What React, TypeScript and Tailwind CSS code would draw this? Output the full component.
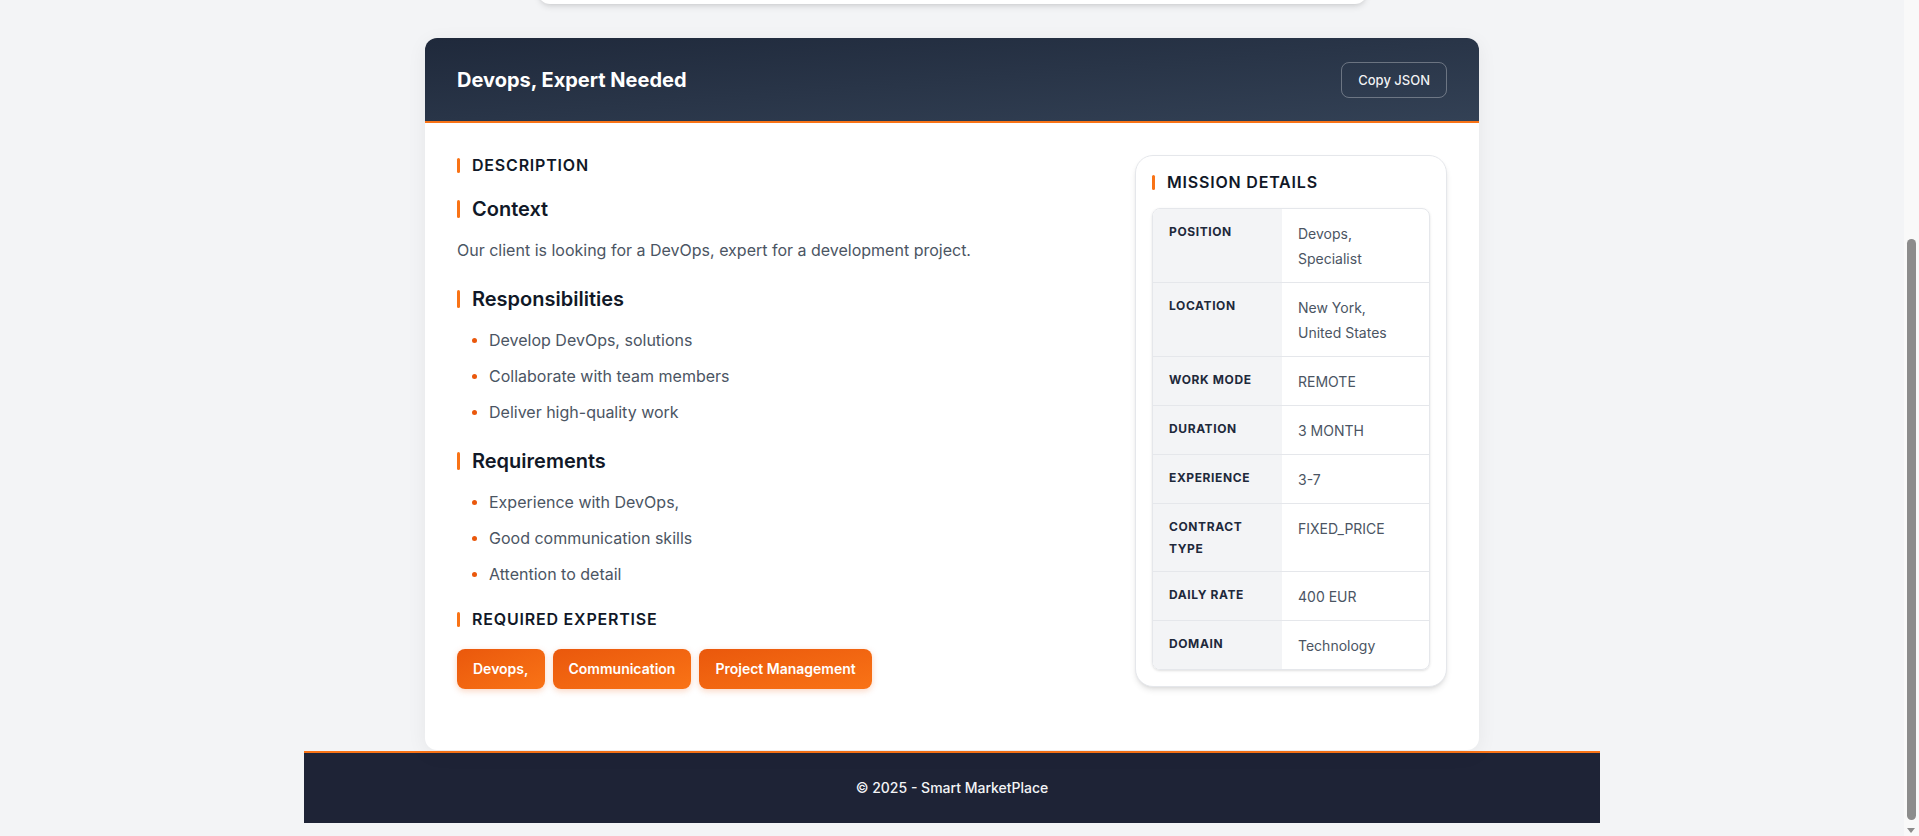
import { useLayoutEffect } from "react";

const details = [
  { label: "Position", value: "Devops, Specialist" },
  { label: "Location", value: "New York, United States" },
  { label: "Work Mode", value: "REMOTE" },
  { label: "Duration", value: "3 MONTH" },
  { label: "Experience", value: "3-7" },
  { label: "Contract Type", value: "FIXED_PRICE" },
  { label: "Daily Rate", value: "400 EUR" },
  { label: "Domain", value: "Technology" },
];

const responsibilities = [
  "Develop DevOps, solutions",
  "Collaborate with team members",
  "Deliver high-quality work",
];

const requirements = [
  "Experience with DevOps,",
  "Good communication skills",
  "Attention to detail",
];

const skills = ["Devops,", "Communication", "Project Management"];

function SectionLabel({ children, className = "" }: { children: string; className?: string }) {
  return (
    <div className={`flex items-center gap-3 ${className}`}>
      <span className="w-[3px] h-[15px] rounded-sm bg-[#f97316]" />
      <h4 className="text-base leading-5 font-semibold tracking-wider uppercase text-[#111827]">
        {children}
      </h4>
    </div>
  );
}

function SubHeading({ children }: { children: string }) {
  return (
    <div className="flex items-center gap-3 mb-[14px]">
      <span className="w-[3px] h-[18px] rounded-sm bg-[#f97316]" />
      <h3 className="text-xl leading-7 font-semibold text-[#111827]">{children}</h3>
    </div>
  );
}

function BulletList({ items }: { items: string[] }) {
  return (
    <ul className="flex flex-col gap-[10px] mb-[22px]">
      {items.map((item) => (
        <li key={item} className="flex items-center gap-3 pl-[15px] text-base leading-[26px] text-[#4b5563]">
          <span className="w-[5px] h-[5px] rounded-full bg-[#ea580c] shrink-0" />
          {item}
        </li>
      ))}
    </ul>
  );
}

function GeneratorCard() {
  return (
    <div className="w-[829px] h-[288px] rounded-xl bg-white shadow-md px-6 pt-6 pb-20 flex flex-col gap-4">
      <h2 className="text-lg font-semibold text-[#111827]">Generate a mission</h2>
      <div className="flex gap-3">
        <input
          className="flex-1 rounded-lg border border-gray-200 px-3 py-2 text-sm text-[#4b5563]"
          defaultValue="Devops, expert needed in New York, remote, 3 months"
        />
        <button className="rounded-lg bg-[#f97316] px-5 py-2 text-sm font-semibold text-white">
          Generate
        </button>
      </div>
    </div>
  );
}

function ScrollTrack() {
  return (
    <div aria-hidden className="fixed right-0 top-0 w-[15px] h-screen bg-[#f9f9f9]">
      <div className="absolute left-[3px] top-[239px] w-[9px] h-[581px] rounded-full bg-[#8c8c8c]" />
      <div className="absolute left-[3px] bottom-[3px] w-0 h-0 border-l-[4.5px] border-r-[4.5px] border-t-[5px] border-l-transparent border-r-transparent border-t-[#8c8c8c]" />
    </div>
  );
}

export default function App() {
  useLayoutEffect(() => {
    window.scrollTo(0, document.documentElement.scrollHeight);
  }, []);

  return (
    <div className="min-h-screen bg-[#f3f4f6] font-['Inter',sans-serif] pb-[13px] pr-[15px]">
      <div className="pt-10 flex justify-center">
        <GeneratorCard />
      </div>

      <main className="mt-[34px] flex justify-center">
        <div className="w-[1054px] rounded-xl bg-white overflow-hidden shadow-[0_4px_20px_rgba(0,0,0,0.06)]">
          <div className="h-[85px] flex items-center justify-between px-8 border-b-2 border-[#f97316] bg-linear-to-br from-[#1f293b] to-[#334155]">
            <h1 className="text-xl leading-7 font-bold text-white">Devops, Expert Needed</h1>
            <button className="rounded-lg border border-white/30 px-4 py-2 text-[13px] leading-[18px] font-medium text-white/95">
              Copy JSON
            </button>
          </div>

          <div className="flex gap-8 px-8 pt-8 pb-[61px]">
            <div className="flex-1">
              <SectionLabel className="mb-5">Description</SectionLabel>

              <SubHeading>Context</SubHeading>
              <p className="text-base leading-[26px] text-[#4b5563] mb-[22px]">
                Our client is looking for a DevOps, expert for a development project.
              </p>

              <SubHeading>Responsibilities</SubHeading>
              <BulletList items={responsibilities} />

              <SubHeading>Requirements</SubHeading>
              <BulletList items={requirements} />

              <SectionLabel className="mb-5">Required Expertise</SectionLabel>
              <div className="flex gap-2">
                {skills.map((s) => (
                  <span
                    key={s}
                    className="h-10 flex items-center px-4 rounded-lg bg-linear-to-br from-[#ea580c] to-[#f97316] text-sm font-semibold text-white shadow-[0_2px_6px_rgba(234,88,12,0.25)]"
                  >
                    {s}
                  </span>
                ))}
              </div>
            </div>

            <aside className="w-[312px] shrink-0 self-start rounded-[18px] border border-gray-200 bg-white p-4 shadow-md">
              <SectionLabel className="mb-4">Mission Details</SectionLabel>
              <div className="rounded-lg border border-gray-200 overflow-hidden shadow-sm">
                {details.map((d, i) => (
                  <div
                    key={d.label}
                    className={`flex ${i < details.length - 1 ? "border-b border-gray-200" : ""}`}
                  >
                    <div className="w-[129px] shrink-0 bg-[#f3f4f6] px-4 py-[11.5px] text-xs leading-[22px] font-bold tracking-wider uppercase text-[#1e293b]">
                      {d.label}
                    </div>
                    <div className="flex-1 px-4 py-[11.5px] text-sm leading-[25px] text-[#4b5563]">
                      {d.value}
                    </div>
                  </div>
                ))}
              </div>
            </aside>
          </div>
        </div>
      </main>

      <footer className="mt-px mx-auto w-[1296px] h-[72px] border-t-2 border-[#f97316] bg-[#1e2336] flex items-center justify-center">
        <p className="text-sm font-medium text-gray-100">© 2025 - Smart MarketPlace</p>
      </footer>

      <ScrollTrack />
    </div>
  );
}
